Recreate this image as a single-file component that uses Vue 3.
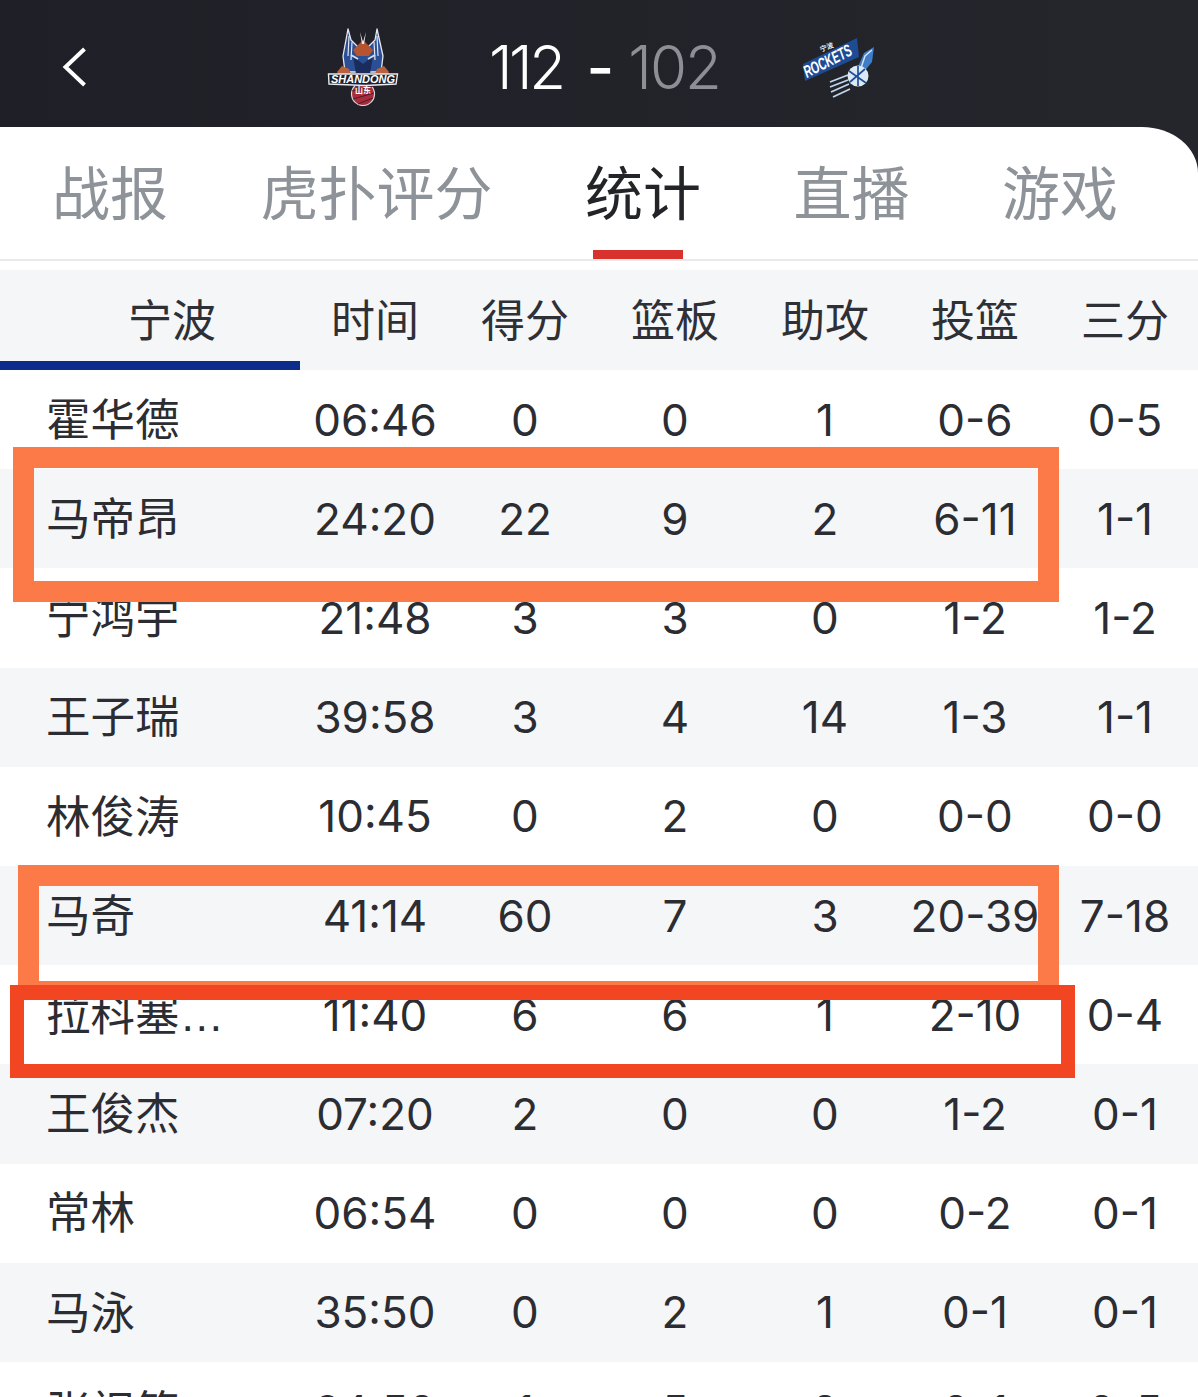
<script setup>
const tabs = ['战报', '虎扑评分', '统计', '直播', '游戏']
const cols = ['时间', '得分', '篮板', '助攻', '投篮', '三分']
const rows = [
  ['霍华德', '06:46', '0', '0', '1', '0-6', '0-5'],
  ['马帝昂', '24:20', '22', '9', '2', '6-11', '1-1'],
  ['宁鸿宇', '21:48', '3', '3', '0', '1-2', '1-2'],
  ['王子瑞', '39:58', '3', '4', '14', '1-3', '1-1'],
  ['林俊涛', '10:45', '0', '2', '0', '0-0', '0-0'],
  ['马奇', '41:14', '60', '7', '3', '20-39', '7-18'],
  ['拉科塞…', '11:40', '6', '6', '1', '2-10', '0-4'],
  ['王俊杰', '07:20', '2', '0', '0', '1-2', '0-1'],
  ['常林', '06:54', '0', '0', '0', '0-2', '0-1'],
  ['马泳', '35:50', '0', '2', '1', '0-1', '0-1'],
  ['张祝筠', '24:50', '1', '5', '0', '0-1', '0-5'],
]
</script>

<template>
  <div class="page">
    <header class="top">
      <svg class="back" viewBox="0 0 24 40" aria-label="返回"><path d="M22 2 3 20l19 18" /></svg>
      <div class="match">
        <svg class="logo-sd" viewBox="0 0 72 78">
          <circle cx="36" cy="66" r="11.5" fill="#a92c3c" stroke="#d9d6de" stroke-width="1.2" />
          <path d="M25 63 47 58M26 71 47 65M31 76 46 70" stroke="#4a1a26" stroke-width="1" fill="none" />
          <path d="M15 44 36 62 57 44 52 52 36 64 20 52Z" fill="#5c2a48" />
          <path d="M21 1 24 12 30 18 36 20 42 18 48 12 50 1 56 28 54 44H18L16 28Z" fill="#2a4f94" stroke="#e6e8f0" stroke-width="1.3" stroke-linejoin="round" />
          <path d="M22 8 21 28M25 14 24 32M50 8 51 28M47 14 48 32" stroke="#dfe5f2" stroke-width="1.2" fill="none" />
          <path d="M26 22 36 12 46 22 42 28H30Z" fill="#b5542f" />
          <path d="M33 4 36 14 39 4 37 16H35Z" fill="#f2eeee" />
          <path d="M26 28 36 36 46 28 43 46 36 52 29 46Z" fill="#1b2c5c" />
          <path d="M24 27 31 31M48 27 41 31" stroke="#cfe0f5" stroke-width="2" fill="none" />
          <path d="M10 44 15 38 22 41 24 46 21 50H13Z" fill="#b8613c" />
          <path d="M62 44 57 38 50 41 48 46 51 50H59Z" fill="#b8613c" />
          <path d="M1.5 46 70.5 46 69 56 38 57.5 2 56Z" fill="#1c1f2d" stroke="#e9e9ee" stroke-width="1.4" />
          <text x="36" y="55" text-anchor="middle" textLength="64" lengthAdjust="spacingAndGlyphs" class="sd-text">SHANDONG</text>
          <text x="36" y="65" text-anchor="middle" class="sd-sub">山东</text>
        </svg>
        <div class="score">
          <span class="home">112</span>
          <span class="dash">-</span>
          <span class="away">102</span>
        </div>
        <svg class="logo-nb" viewBox="0 0 74 60">
          <path d="M1 26 55 0 57 19 3 43Z" fill="#1d4c94" />
          <text transform="translate(5 40) rotate(-27)" textLength="52" lengthAdjust="spacingAndGlyphs" class="nb-text">ROCKETS</text>
          <text transform="translate(19 14) rotate(-20)" class="nb-sub">宁波</text>
          <path d="M72 9 62 15 55 31 61 35 70 24Z" fill="#3f7dc8" />
          <path d="M70 12 63 18 59 30" stroke="#d5e5f7" stroke-width="1.4" fill="none" />
          <circle cx="56" cy="38" r="10.5" fill="#dbe8f6" />
          <path d="M47 33 64 45M48 44 63 31M56 28V48" stroke="#1f4f96" stroke-width="1.7" fill="none" />
          <path d="M28 44 46 37M28 49 46 42M29 54 47 46M31 59 48 51" stroke="#c2d6ee" stroke-width="1.8" fill="none" />
        </svg>
      </div>
    </header>

    <section class="sheet">
      <nav class="tabs">
        <div v-for="t in tabs" :key="t" class="tab" :class="{ on: t === '统计' }">
          {{ t }}
          <i v-if="t === '统计'" class="tab-bar"></i>
        </div>
      </nav>

      <div class="table">
        <div class="thead">
          <div class="team"><span>宁波</span></div>
          <div v-for="c in cols" :key="c" class="th">{{ c }}</div>
        </div>
        <div v-for="(r, i) in rows" :key="r[0]" class="row" :class="{ alt: i % 2 === 1 }">
          <div class="name">{{ r[0] }}</div>
          <div v-for="(v, j) in r.slice(1)" :key="j" class="cell">{{ v }}</div>
        </div>
      </div>
    </section>

    <div class="mark orange one"></div>
    <div class="mark orange two"></div>
    <div class="mark red"></div>
  </div>
</template>

<style>
html, body { margin: 0; background: #fff; }
</style>

<style scoped>
.page {
  position: relative;
  width: 1198px;
  height: 1397px;
  overflow: hidden;
  background: linear-gradient(90deg, #1f2027, #25262c);
  font-family: Inter, "Noto Sans CJK SC", sans-serif;
  color: #2b2d33;
}
.top {
  height: 127px;
  display: flex;
  align-items: center;
  position: relative;
}
.back {
  position: absolute;
  left: 62px;
  top: 47px;
  width: 25px;
  height: 40px;
  fill: none;
  stroke: #fff;
  stroke-width: 4;
}
.match {
  display: flex;
  align-items: center;
  margin-left: 327px;
}
.logo-sd { width: 72px; height: 78px; margin-top: 7px; flex: none; }
.logo-nb { width: 74px; height: 60px; margin-left: 84px; margin-top: 9px; flex: none; }
.score {
  margin-left: 90px;
  width: 229px;
  font-size: 60px;
  font-weight: 300;
  line-height: 1;
  display: flex;
  align-items: center;
  white-space: pre;
  margin-top: 6px;
}
.home { color: #fff; letter-spacing: -3.5px; }
.dash { color: #fff; font-weight: 500; margin-left: 24px; }
.away { color: #8d8e96; letter-spacing: -2px; margin-left: 14px; }
.sd-text { font: italic 700 10.5px "Liberation Sans", sans-serif; fill: #fff; }
.sd-sub { font: 700 8px "Noto Sans CJK SC", sans-serif; fill: #fff; }
.nb-text { font: italic 700 17px "Liberation Sans", sans-serif; fill: #fff; }
.nb-sub { font: 700 7px "Noto Sans CJK SC", sans-serif; fill: #dbe8f6; }

.sheet {
  height: 1270px;
  background: #fff;
  border-top-right-radius: 56px 46px;
  overflow: hidden;
}
.tabs {
  height: 134px;
  box-sizing: border-box;
  border-bottom: 2px solid #e8e9eb;
  padding-left: 52px;
  display: flex;
  gap: 92.5px;
  font-family: "Noto Sans CJK SC", sans-serif;
  font-size: 58px;
  line-height: 126px;
  color: #8e9399;
}
.tab { position: relative; white-space: nowrap; }
.tab.on { color: #232428; }
.tab-bar {
  position: absolute;
  left: 8px;
  bottom: 0;
  width: 90px;
  height: 9px;
  background: #d8322f;
}
.table { width: 1200px; margin-top: 9px; }
.thead {
  display: grid;
  grid-template-columns: 300px repeat(6, 150px);
  height: 100px;
  background: #f5f6f8;
  font-family: "Noto Sans CJK SC", sans-serif;
  font-size: 44px;
  color: #2e3036;
}
.team {
  height: 100px;
  box-sizing: border-box;
  border-bottom: 9px solid #0c2c8c;
  padding-left: 128px;
  line-height: 97px;
}
.th { text-align: center; line-height: 97px; }
.row {
  display: grid;
  grid-template-columns: 300px repeat(6, 150px);
  height: 99.2px;
  align-items: center;
  font-size: 44px;
}
.row.alt { background: #f5f6f8; }
.name {
  padding: 3px 0 0 46px;
  font-family: "Liberation Sans", "Noto Sans CJK SC", sans-serif;
  font-size: 44.5px;
  line-height: 1;
  white-space: nowrap;
}
.cell { text-align: center; line-height: 1; }

.mark { position: absolute; box-sizing: border-box; }
.orange { border: 21px solid #fb7a48; }
.one { left: 13px; top: 447px; width: 1046px; height: 155px; }
.two { left: 18px; top: 865px; width: 1041px; height: 122px; border-bottom-width: 6px; }
.red {
  left: 10px;
  top: 985px;
  width: 1065px;
  height: 93px;
  border: 14px solid #f24522;
  border-top-width: 15px;
}
</style>
